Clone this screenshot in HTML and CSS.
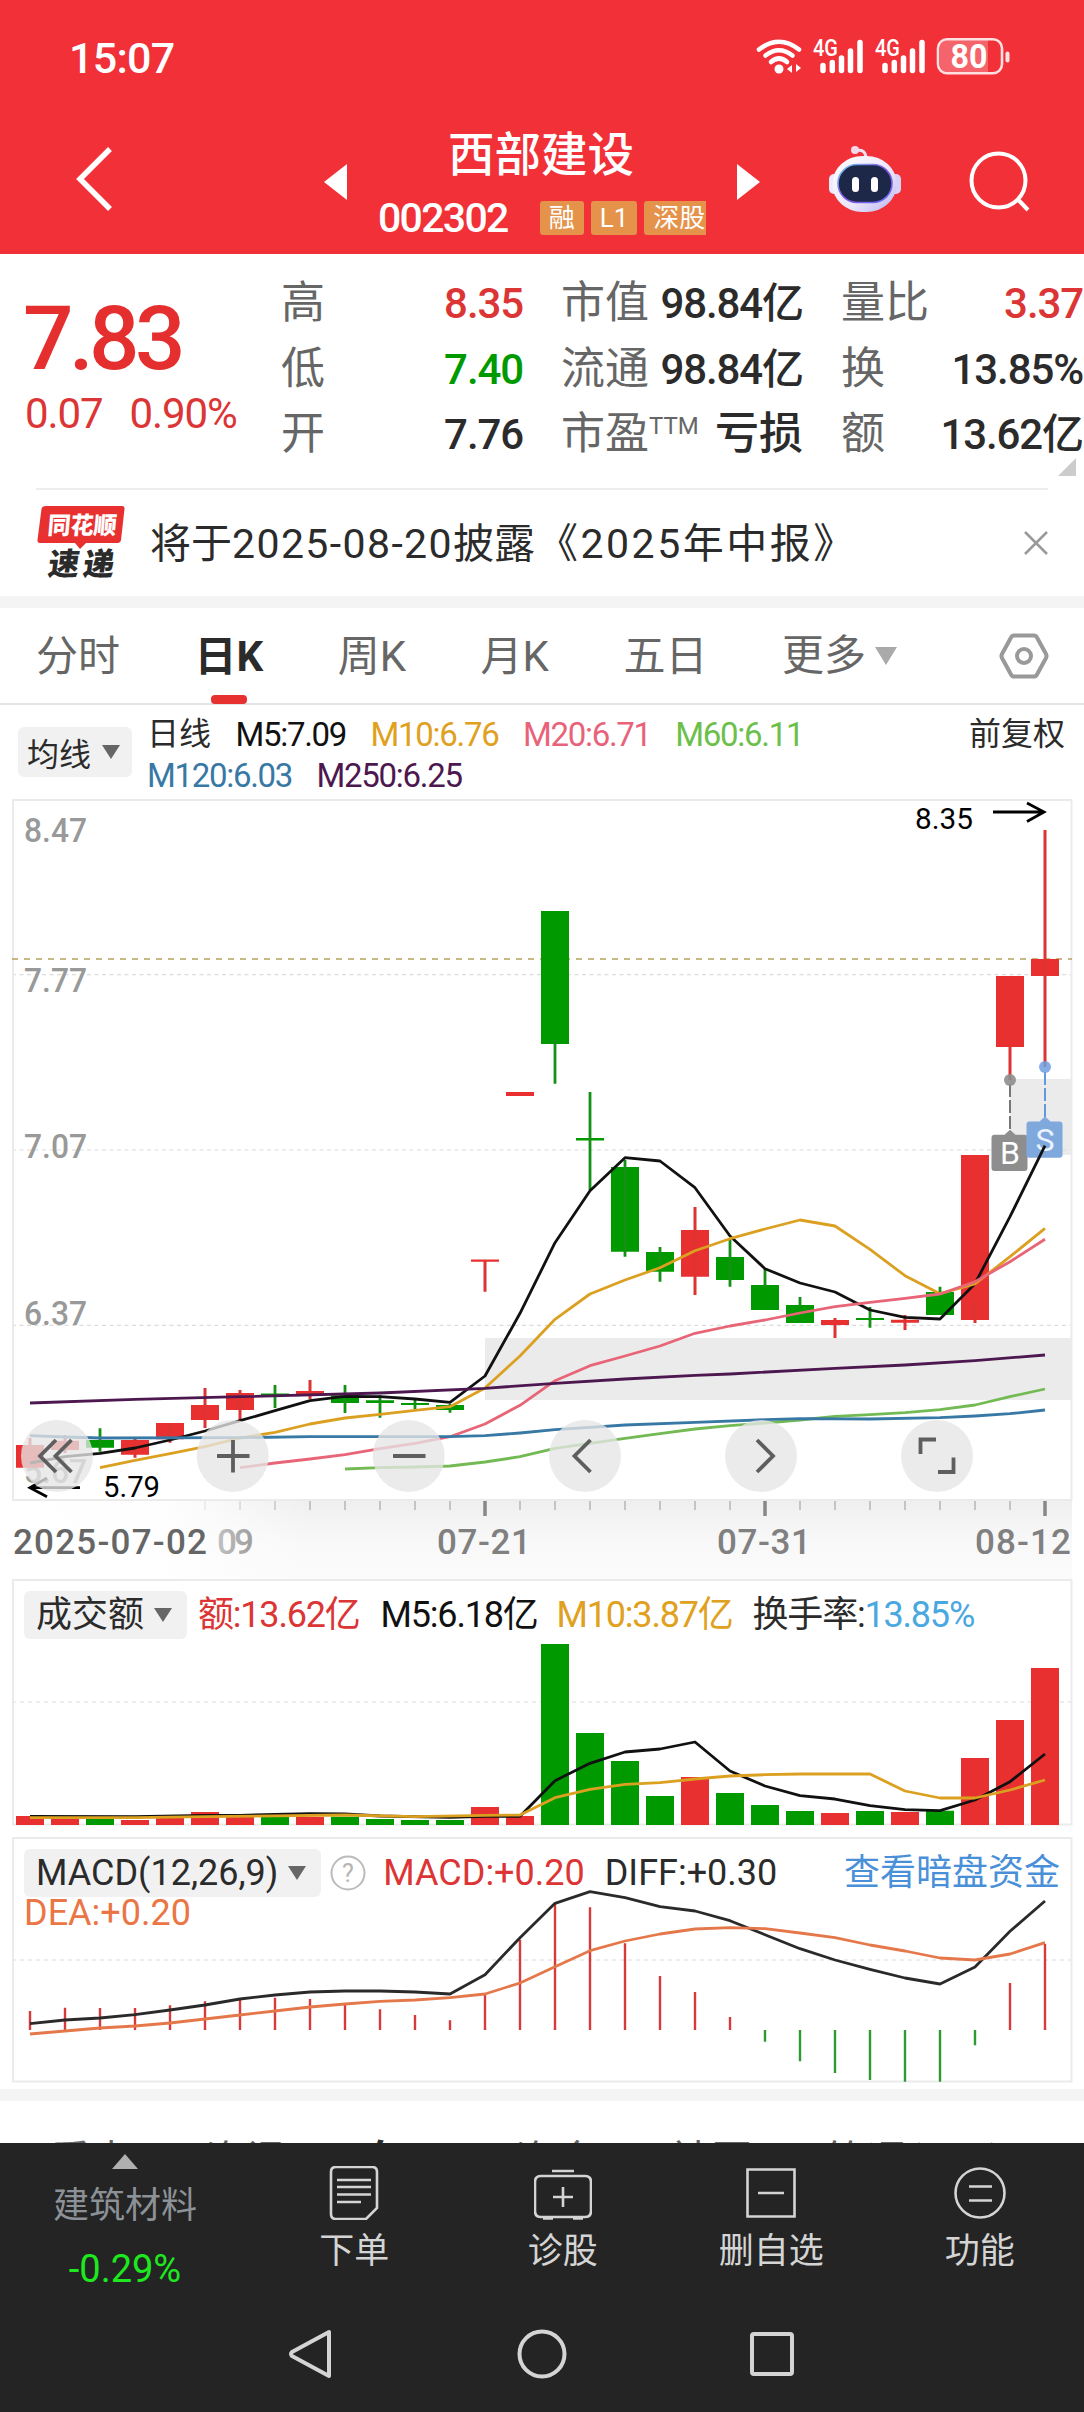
FILE: index.html
```html
<!DOCTYPE html>
<html lang="zh-CN">
<head>
<meta charset="utf-8">
<title>西部建设 002302</title>
<link rel="stylesheet" href="styles.css">
</head>
<body>
<div class="screen">
  <header class="header">
    <div class="status">
      <span class="clock">15:07</span>
      <svg class="status-icons" viewBox="750 30 270 50" width="270" height="50" fill="none" stroke="#fff" stroke-linecap="round">
        <g stroke-width="4.6"><path d="M759 48.500Q779 33 799 48.500"/><path d="M765.500 54.500Q779 44 792.500 54.500"/><path d="M771 61Q779 54 787 61"/></g>
        <circle cx="779" cy="68" r="4.500" fill="#fff" stroke="none"/>
        <path d="M787 68l5-4v8zM801 67l-5-4v8z" fill="#fff" stroke="none"/>
        <path stroke-width="5.500" d="M823 64.500v5M832.300 61.500v8M841.500 57v12.500M850.500 50v19.500M860 41.500v28M885 64.500v5M894.300 61.500v8M903.500 57v12.500M912.500 50v19.500M922 41.500v28"/>
        <g fill="#fff" stroke="none" font-size="23" font-weight="500"><text x="813" y="55" textLength="25" lengthAdjust="spacingAndGlyphs">4G</text><text x="875" y="55" textLength="25" lengthAdjust="spacingAndGlyphs">4G</text></g>
        <path d="M948 39h40v32h-40q-8 0-8-8V47q0-8 8-8z" fill="#f5646a" stroke="none"/>
        <rect x="938" y="38.200" width="64" height="34" rx="9" stroke="#ffdfe0" stroke-width="2.600"/>
        <path stroke="#ffdfe0" stroke-width="4" d="M1007.500 52.500v7"/>
        <text x="950.500" y="66.700" font-size="33" font-weight="700" fill="#fff" stroke="none" textLength="37" lengthAdjust="spacingAndGlyphs">80</text>
      </svg>
    </div>
    <div class="titlebar">
      <svg class="back" viewBox="0 0 40 66" width="40" height="66"><path d="M36 3 6 33 36 63" fill="none" stroke="#fff" stroke-width="5.500"/></svg>
      <svg class="prev" viewBox="0 0 23 36" width="23" height="36"><path d="M23 0v36L0 18z" fill="#fff"/></svg>
      <div class="stock">
        <h1 class="stock-name">西部建设</h1>
        <div class="stock-meta">
          <span class="code">002302</span>
          <span class="badge">融</span><span class="badge">L1</span><span class="badge cut">深股</span>
        </div>
      </div>
      <svg class="next" viewBox="0 0 23 36" width="23" height="36"><path d="M0 0v36l23-18z" fill="#fff"/></svg>
      <svg class="robot" viewBox="828 144 74 70" width="74" height="70">
        <defs><linearGradient id="shell" x1="0" y1="0" x2="1" y2="1"><stop offset="0" stop-color="#fff"/><stop offset=".6" stop-color="#ebe6fb"/><stop offset="1" stop-color="#b9b2f0"/></linearGradient>
        <linearGradient id="rim" x1="0" y1="0" x2="1" y2="1"><stop offset="0" stop-color="#6fd2ee"/><stop offset=".5" stop-color="#8a52e8"/><stop offset="1" stop-color="#5a6ff0"/></linearGradient></defs>
        <path d="M855 151q11-3 11 8" fill="none" stroke="#f1dff2" stroke-width="3"/><circle cx="855" cy="150" r="4" fill="#f3d8ea"/>
        <rect x="829" y="174" width="12" height="20" rx="5" fill="#ece9fb"/><rect x="889" y="174" width="12" height="20" rx="5" fill="#d8d2f6"/>
        <rect x="832.500" y="156" width="64" height="56" rx="30" ry="27" fill="url(#shell)"/>
        <rect x="838" y="164.500" width="54" height="38" rx="19" fill="#1d2748" stroke="url(#rim)" stroke-width="1.600"/>
        <rect x="852" y="177" width="7" height="15" rx="3.500" fill="#fff"/><rect x="871" y="177" width="7" height="15" rx="3.500" fill="#fff"/>
      </svg>
      <svg class="search" viewBox="968 150 64 64" width="64" height="64" fill="none" stroke="#fff" stroke-width="4"><circle cx="998.500" cy="180.500" r="27"/><path d="M1018 199.500 1028 210"/></svg>
    </div>
  </header>

  <section class="quote">
    <div class="price-box">
      <div class="price">7.83</div>
      <div class="change"><span>0.07</span><span>0.90%</span></div>
    </div>
    <dl class="stats">
      <div><dt>高</dt><dd class="up">8.35</dd></div>
      <div><dt>市值</dt><dd>98.84亿</dd></div>
      <div><dt>量比</dt><dd class="up">3.37</dd></div>
      <div><dt>低</dt><dd class="down">7.40</dd></div>
      <div><dt>流通</dt><dd>98.84亿</dd></div>
      <div><dt>换</dt><dd>13.85%</dd></div>
      <div><dt>开</dt><dd>7.76</dd></div>
      <div><dt>市盈<span class="ttm">TTM</span></dt><dd class="loss">亏损</dd></div>
      <div><dt>额</dt><dd>13.62亿</dd></div>
    </dl>
    <svg class="corner" viewBox="0 0 18 18" width="18" height="18"><path d="M18 0v18H0z" fill="#ccc"/></svg>
  </section>

  <section class="notice">
    <svg class="logo" viewBox="36 504 90 76" width="90" height="76">
      <path d="M46 506h76q3 0 2.500 3l-3.500 31q-.5 3-3.500 3H86l-6 6-5-6H40q-3 0-2.500-3l4-31q.5-3 4.500-3z" fill="#e7302f"/>
      <g font-weight="900"><text transform="translate(47 534) skewX(-5)" font-size="24" fill="#fff" textLength="69" lengthAdjust="spacingAndGlyphs">同花顺</text>
      <text transform="translate(47 575) skewX(-8)" font-size="31" fill="#2b2b2b" textLength="66" lengthAdjust="spacing">速递</text></g>
    </svg>
    <p class="notice-text">将于<span class="date">2025-08-20</span>披露<span class="report">《2025年中报》</span></p>
    <svg class="close" viewBox="0 0 24 24" width="24" height="24"><path d="M1 1l22 22M23 1 1 23" stroke="#999" stroke-width="2.500"/></svg>
  </section>

  <nav class="tabs">
    <span>分时</span><span class="active">日K</span><span>周K</span><span>月K</span><span>五日</span>
    <span class="more">更多<svg viewBox="0 0 22 18" width="22" height="18"><path d="M0 0h22L11 18z" fill="#aaa"/></svg></span>
    <svg class="settings" viewBox="0 0 50 46" width="50" height="46" fill="none" stroke="#999" stroke-width="4"><path d="M15 2.500h20q2 0 3 2l9 16.500q1 2 0 4l-9 16.500q-1 2-3 2H15q-2 0-3-2L3 25q-1-2 0-4l9-16.500q1-2 3-2z"/><circle cx="25" cy="23" r="7"/></svg>
  </nav>

  <section class="ma-legend">
    <button class="chip small">均线<i class="caret"></i></button>
    <div class="ma-items">
      <span class="day">日线</span><span class="m5">M5:7.09</span><span class="m10">M10:6.76</span><span class="m20">M20:6.71</span><span class="m60">M60:6.11</span>
      <span class="m120">M120:6.03</span><span class="m250">M250:6.25</span>
    </div>
    <span class="adjust">前复权</span>
  </section>

  <svg class="kline" viewBox="0 799 1084 702" width="1084" height="702" fill="none">
    <path fill="#ebebeb" d="M485 1338h587v62H485zM1010 1079h62v76h-62z"/>
    <path stroke="#dcdcdc" stroke-width="1.200" stroke-dasharray="4 3.500" d="M12 974.700h1060M12 1150h1060M12 1325.300h1060"/>
    <path stroke="#ebebeb" stroke-width="2" d="M13 800h1058.500v700H13z"/>
    <g class="axis-label" fill="#999" font-size="34" font-weight="500">
      <text x="24" y="841.700" textLength="63" lengthAdjust="spacingAndGlyphs">8.47</text>
      <text x="24" y="992" textLength="63" lengthAdjust="spacingAndGlyphs">7.77</text>
      <text x="24" y="1158" textLength="63" lengthAdjust="spacingAndGlyphs">7.07</text>
      <text x="24" y="1324.500" textLength="63" lengthAdjust="spacingAndGlyphs">6.37</text>
      <text x="24" y="1482.500" textLength="63" lengthAdjust="spacingAndGlyphs">5.67</text>
    </g>
    <path stroke="#b5a25c" stroke-width="1.600" stroke-dasharray="6 6" d="M12 959h1060"/>
    <path fill="#e83030" d="M16 1445h28v22.700H16zM51 1440.700h28v9.300H51zM121 1440h28v14.700h-28zM156 1423h28v16.300h-28zM191 1405h28v15h-28zM226 1393h28v17h-28zM296 1391h28v3.500h-28zM471 1259.500h28v2.300h-28zM506 1092h28v4h-28zM681 1230h28v46.700h-28zM821 1320h28v5h-28zM891 1319.700h28v3h-28zM961 1155h28v165h-28zM996 976h28v71h-28zM1031 959h28v17h-28z"/>
    <path stroke="#dd3333" stroke-width="3" d="M30 1438v7M65 1435v18M135 1438.700v19M170 1423v19.700M205 1388v40M240 1390v30.700M310 1380v19M485 1260v31.700M695 1207v88M835 1318v20M905 1315v15M975 1300v23M1010 1047v33M1045 830v237"/>
    <path fill="#009a00" d="M86 1440h28v7.700H86zM261 1393.500h28v2h-28zM331 1395.300h28v7.700h-28zM366 1400.300h28v2.700h-28zM401 1403h28v2h-28zM436 1405h28v5h-28zM541 911h28v133h-28zM576 1138h28v2.400h-28zM611 1167h28v84.700h-28zM646 1252h28v19.700h-28zM716 1257h28v23h-28zM751 1285h28v25h-28zM786 1305h28v18h-28zM856 1318h28v2h-28zM926 1292h28v23h-28z"/>
    <path stroke="#149014" stroke-width="2.800" d="M100 1428.300v23.400M275 1385v23M345 1385v28M380 1395.300v22.400M415 1400v9M450 1404v8.700M555 1040v43.700M590 1092v98M625 1160v96.700M660 1247v34.700M730 1238v48.700M765 1268v20M800 1297v10M870 1307v20.700M940 1286.700v8"/>
    <path stroke="#777" stroke-width="2" d="M1010 1084v50" stroke-dasharray="13 3"/>
    <path stroke="#5f9bdc" stroke-width="2" d="M1045 1072v46" stroke-dasharray="13 3"/>
    <circle cx="1010" cy="1080" r="6" fill="#8e8e8e" opacity=".9"/><circle cx="1045" cy="1067" r="6" fill="#6f9fe0" opacity=".85"/>
    <path fill="#8e8e8e" d="M994.500 1134.700h10l5.500-5 5.500 5h9q3 0 3 3v30.300q0 3-3 3h-30q-3 0-3-3v-30.300q0-3 3-3z"/>
    <path fill="#7fa9dd" d="M1029.500 1121.500h10l5.500-5 5.500 5h9q3 0 3 3v30.300q0 3-3 3h-30q-3 0-3-3v-30.300q0-3 3-3z"/>
    <text x="1010" y="1164" font-size="32" fill="#fff" text-anchor="middle">B</text>
    <text x="1045" y="1151" font-size="32" fill="#eaf2ff" text-anchor="middle">S</text>
    <g stroke-width="2.800" stroke-linejoin="round">
      <path stroke="#111" d="M30 1463 65 1456.700 100 1453.300 135 1448 170 1440 205 1431 240 1420.700 275 1410.700 310 1400.700 345 1396.300 380 1396.700 415 1399 450 1402.300 485 1376 520 1313.300 555 1242.700 590 1190.700 625 1157.700 660 1161 695 1187.700 730 1236 765 1268.700 800 1283 835 1292 870 1310 905 1317.300 940 1319 975 1283.700 1010 1216.700 1045 1145.700"/>
      <path stroke="#dca021" d="M100 1467.700 135 1460.300 170 1453.700 205 1446.700 240 1438 275 1432.300 310 1424 345 1418 380 1414.300 415 1410.300 450 1406.700 485 1388 520 1356 555 1319.300 590 1294 625 1280 660 1267.700 695 1250.700 730 1238.700 765 1229 800 1220 835 1226 870 1249.300 905 1275.700 940 1293.700 975 1284 1010 1256.700 1045 1228.300"/>
      <path stroke="#e76576" d="M240 1467.700 275 1463 310 1459 345 1454.700 380 1448.700 415 1443.300 450 1436.700 485 1424 520 1405.300 555 1380.700 590 1365.700 625 1356 660 1346 695 1333.300 730 1326 765 1320 800 1313 835 1306.700 870 1302.300 905 1298.300 940 1294 975 1281.700 1010 1261.700 1045 1239.300"/>
      <path stroke="#73ba54" d="M345 1469 380 1467.700 415 1467 450 1466 485 1462 520 1456.700 555 1448.300 590 1443.300 625 1438.300 660 1433.700 695 1429 730 1425.700 765 1423 800 1420 835 1416.300 870 1414.700 905 1412.700 940 1409.700 975 1405 1010 1396.700 1045 1389"/>
      <path stroke="#3878a5" d="M30 1435.700 65 1437 100 1438 240 1437.700 310 1436.700 450 1436.700 485 1435.700 520 1433 555 1429.700 590 1427.300 625 1425 695 1422.300 765 1419.700 800 1418.700 870 1419 940 1417.700 975 1416 1010 1413.700 1045 1410"/>
      <path stroke="#4d1850" d="M30 1403 135 1399.300 240 1396.700 380 1393 485 1388.300 555 1383.300 625 1379 695 1375.300 730 1374 835 1368.300 905 1365 975 1360.700 1045 1355"/>
    </g>
    <path stroke="#000" stroke-width="2.800" d="M993 812h50M1027 803l17 9-17 9.500M80 1487.700H30M47 1478l-17 9.700 17 9"/>
    <g font-size="30" fill="#000"><text x="915" y="829" textLength="58" lengthAdjust="spacingAndGlyphs">8.35</text><text x="103" y="1496.500" textLength="57" lengthAdjust="spacingAndGlyphs">5.79</text></g>
    <g fill="#e6e6e6" fill-opacity=".78"><circle cx="57" cy="1456" r="36"/><circle cx="232.700" cy="1456" r="36"/><circle cx="408.700" cy="1456" r="36"/><circle cx="585" cy="1456" r="36"/><circle cx="761" cy="1456" r="36"/><circle cx="937" cy="1456" r="36"/></g>
    <path stroke="#5e5e5e" stroke-width="3.800" d="M56 1440l-16 16 16 16M71.500 1440l-16 16 16 16M217 1456h32.500M233 1440v32.500M393 1456h32.500M590.500 1440l-16 16 16 16M757 1440l16 16-16 16M920.500 1454v-14.500h15.500M953.500 1457.500v14.500H938"/>
  </svg>

  <svg class="time-axis" viewBox="0 1501 1084 78" width="1084" height="78" font-size="35">
    <defs>
      <linearGradient id="shade" x1="0" y1="0" x2="0" y2="1"><stop offset="0" stop-color="#efefef"/><stop offset=".5" stop-color="#f8f8f8"/><stop offset="1" stop-color="#fbfbfb"/></linearGradient>
      <linearGradient id="fade"><stop offset="0" stop-color="#fff"/><stop offset=".55" stop-color="#fff" stop-opacity=".9"/><stop offset="1" stop-color="#fff" stop-opacity="0"/></linearGradient>
    </defs>
    <path fill="url(#shade)" d="M12 1501h1060v78H12z"/>
    <path stroke="#c4c4c4" stroke-width="2" d="M205 1501v9M240 1501v9M275 1501v9M310 1501v9M345 1501v9M380 1501v9M415 1501v9M450 1501v9M520 1501v9M555 1501v9M590 1501v9M625 1501v9M660 1501v9M695 1501v9M730 1501v9M800 1501v9M835 1501v9M870 1501v9M905 1501v9M940 1501v9M975 1501v9M1010 1501v9"/>
    <path stroke="#888" stroke-width="3.500" d="M485 1501v15M765 1501v15M1045 1501v15"/>
    <text x="217" y="1554" fill="#666" font-weight="500" textLength="37">09</text>
    <path fill="url(#fade)" d="M0 1501h310v78H0z"/>
    <g font-weight="500"><text x="13" y="1554" fill="#666" textLength="194">2025-07-02</text>
    <g fill="#808080"><text x="437" y="1554" textLength="94">07-21</text><text x="717" y="1554" textLength="94">07-31</text><text x="975" y="1554" textLength="96">08-12</text></g></g>
  </svg>

  <section class="panel volume">
    <svg class="plot" viewBox="0 1579 1084 247" width="1084" height="247" fill="none">
      <path stroke="#ebebeb" stroke-width="2" d="M13 1580h1058.500v244.500H13z"/>
      <path stroke="#e8e8e8" stroke-width="1.500" stroke-dasharray="4 4" d="M12 1702h1060"/>
      <path fill="#e83030" d="M16 1816h28v9H16zM51 1818.300h28v6.700H51zM121 1820h28v5h-28zM156 1817.300h28v7.700h-28zM191 1812h28v13h-28zM226 1816.700h28v8.300h-28zM296 1817h28v8h-28zM471 1807h28v18h-28zM506 1816h28v9h-28zM681 1777h28v48h-28zM821 1813h28v12h-28zM891 1812h28v13h-28zM961 1758h28v67h-28zM996 1720h28v105h-28zM1031 1668h28v157h-28z"/>
      <path fill="#009a00" d="M86 1819h28v6H86zM261 1817h28v8h-28zM331 1816.700h28v8.300h-28zM366 1819h28v6h-28zM401 1820h28v5h-28zM436 1820h28v5h-28zM541 1644h28v181h-28zM576 1733h28v92h-28zM611 1761h28v64h-28zM646 1796h28v29h-28zM716 1793h28v32h-28zM751 1805h28v20h-28zM786 1811h28v14h-28zM856 1811h28v14h-28zM926 1810.700h28v14.300h-28z"/>
      <g stroke-width="2.800" stroke-linejoin="round">
        <path stroke="#111" d="M30 1816.300 135 1816.700 205 1815.300 240 1815.300 275 1814.300 310 1813.700 345 1814 380 1816 450 1817.300 485 1816.300 520 1816.300 555 1780.700 590 1763.300 625 1752 660 1749 695 1742 730 1771 765 1786 800 1795.700 835 1799 870 1805.700 905 1809.700 940 1810.700 975 1800 1010 1781.700 1045 1754"/>
        <path stroke="#dca021" d="M30 1817.700 135 1817.700 205 1816.700 345 1815 415 1816.700 485 1815.300 520 1815 555 1797.700 590 1789.300 625 1784.300 660 1782.700 695 1779 730 1776 765 1774.700 800 1774 870 1774 905 1791 940 1798 975 1798 1010 1790 1045 1780"/>
      </g>
    </svg>
    <div class="legend">
      <button class="chip">成交额<i class="caret"></i></button>
      <span class="up v1">额:13.62亿</span><span class="m5 v2">M5:6.18亿</span><span class="m10 v3">M10:3.87亿</span><span class="v4">换手率:<b>13.85%</b></span>
    </div>
  </section>

  <section class="panel macd">
    <svg class="plot" viewBox="0 1837 1084 246" width="1084" height="246" fill="none">
      <path stroke="#ebebeb" stroke-width="2" d="M13 1838h1058.500v243.500H13z"/>
      <path stroke="#e8e8e8" stroke-width="1.500" stroke-dasharray="4 4" d="M12 1960h1060"/>
      <path stroke="#d63a3a" stroke-width="2.400" d="M30 2030v-19M65 2030v-22.300M100 2030v-22M135 2030v-22M170 2030v-24.700M205 2030v-28.700M240 2030v-31.700M275 2030v-32.300M310 2030v-31M345 2030v-25.300M380 2030v-20.700M415 2030v-15M450 2030v-9.700M485 2030v-36M520 2030v-90.300M555 2030v-126M590 2030v-122.700M625 2030v-86.700M660 2030v-54M695 2030v-38M730 2030v-13M1010 2030v-47M1045 2030v-86"/>
      <path stroke="#2f9a2f" stroke-width="2.400" d="M765 2030v11.700M800 2030v31.300M835 2030v43M870 2030v50M905 2030v51.700M940 2030v51.700M975 2030v15.300"/>
      <g stroke-width="2.800" stroke-linejoin="round">
        <path stroke="#2a2a2a" d="M30 2023.700 65 2020 100 2018 135 2014.700 170 2010 205 2005 240 1999 275 1995 310 1992 345 1991 380 1991 415 1992 450 1994 485 1974.700 520 1937.700 555 1903.300 590 1891.700 625 1897.700 660 1906.700 695 1911 730 1920.700 765 1934.700 800 1948.700 835 1960 870 1969.300 905 1978 940 1984 975 1967 1010 1931.300 1045 1901"/>
        <path stroke="#e5784a" d="M30 2034 65 2031 100 2028 135 2026 170 2023 205 2019 240 2015 275 2011 310 2007 345 2004 380 2001.300 415 2000 450 1997.700 485 1994 520 1983 555 1966.700 590 1950.700 625 1941 660 1934 695 1929 730 1927.700 765 1928.700 800 1933 835 1937.700 870 1945 905 1951 940 1958 975 1960 1010 1954 1045 1942.700"/>
      </g>
    </svg>
    <div class="legend">
      <button class="chip">MACD(12,26,9)<i class="caret"></i></button>
      <svg class="help" viewBox="0 0 36 36" width="36" height="36"><circle cx="18" cy="18" r="16.500" fill="none" stroke="#bbb" stroke-width="2"/><text x="18" y="27" font-size="25" fill="#b5b5b5" text-anchor="middle">?</text></svg>
      <span class="up c1">MACD:+0.20</span><span class="c2">DIFF:+0.30</span><a class="link">查看暗盘资金</a>
      <span class="dea">DEA:+0.20</span>
    </div>
  </section>

  <nav class="subtabs"><span>看点</span><span>资讯</span><span class="active">盘口</span><span>资金</span><span>社区</span><span>简况(F10)</span></nav>

  <footer class="footer">
    <div class="actions">
      <div class="sector">
        <svg viewBox="0 0 26 15" width="26" height="15"><path d="M13 0l13 15H0z" fill="#b0b0b0"/></svg>
        <span>建筑材料</span><em>-0.29%</em>
      </div>
      <div class="action"><svg viewBox="-27 -27 54 54" width="54" height="54"><path d="M-18-26h36q5 0 5 5v36L12 26h-30q-5 0-5-5v-42q0-5 5-5zM-17-13h34M-17-6h34M-17 1.500h34M-17 9H7"/></svg><span>下单</span></div>
      <div class="action"><svg viewBox="-29 -27 58 54" width="58" height="54"><path d="M-22-17h44q6 0 6 6v29q0 6-6 6h-44q-6 0-6-6v-29q0-6 6-6zM0-6v20M-10 4h20M-11-22h22M-20 25.500h10M10 25.500h10"/></svg><span>诊股</span></div>
      <div class="action"><svg viewBox="-27 -27 54 54" width="54" height="54"><path d="M-23.500-23.500h47v47h-47zM-13 0h26"/></svg><span>删自选</span></div>
      <div class="action"><svg viewBox="-27 -27 54 54" width="54" height="54"><circle r="24.500"/><path d="M-11-6.500h23M-11 7.500h23"/></svg><span>功能</span></div>
    </div>
    <div class="sysnav">
      <svg viewBox="0 0 46 50" width="46" height="50"><path d="M41 3v44L4 27q-2-2 0-4z"/></svg>
      <svg viewBox="0 0 50 50" width="50" height="50"><circle cx="25" cy="25" r="22.500"/></svg>
      <svg viewBox="0 0 46 46" width="46" height="46"><rect x="3" y="3" width="40" height="40" rx="2"/></svg>
    </div>
  </footer>
</div>
</body>
</html>
```
FILE: styles.css
```css
* { box-sizing: border-box; margin: 0; padding: 0; }
body { background: #fff; font-family: Roboto, "Noto Sans CJK SC", sans-serif; color: #2b2b2b; }
svg { display: block; flex: none; }
i, em { font-style: normal; }
button { border: 0; font: inherit; color: inherit; }
.screen { width: 1084px; height: 2412px; overflow: hidden; display: flex; flex-direction: column; }
.screen > * { flex: none; }

.up { color: #dc3535; }
.down { color: #009a00; }
.m5 { color: #111; }
.m10 { color: #e0a020; }
.m20 { color: #e8637a; }
.m60 { color: #6cc04a; }
.m120 { color: #3878a5; }
.m250 { color: #4d1850; }

.header { height: 254px; background: #f13038; color: #fff; }
.status { height: 112px; padding: 3px 64px 0 69px; display: flex; align-items: center; justify-content: space-between; }
.clock { font-size: 43px; font-weight: 500; letter-spacing: -.7px; }
.status-icons { margin-top: -3px; }
.titlebar { height: 142px; display: flex; align-items: flex-start; padding-left: 74px; }
.back { margin-top: 34px; }
.prev { margin: 52px 0 0 210px; }
.stock { width: 390px; padding: 13px 0 0 30px; }
.stock-name { font-size: 46.500px; font-weight: 500; line-height: 60px; padding-left: 71px; }
.stock-meta { display: flex; align-items: center; height: 44px; margin-top: 11px; gap: 7px; }
.code { font-size: 41px; font-weight: 500; letter-spacing: -1.700px; margin: 0 25px 0 1px; }
.badge { height: 34px; line-height: 34px; padding: 0 9px; font-size: 26px; background: #e5924a; border-radius: 3px; white-space: nowrap; }
.badge.cut { width: 62px; overflow: hidden; border-radius: 3px 0 0 3px; }
.next { margin-top: 52px; }
.robot { margin: 32px 0 0 68px; }
.search { margin: 38px 0 0 66px; }

.quote { height: 234px; padding-top: 17px; display: flex; flex-wrap: wrap; align-content: flex-start; }
.price-box { width: 281px; height: 196px; padding-left: 25px; color: #e52f2f; }
.price { font-size: 89px; font-weight: 500; letter-spacing: -4.600px; line-height: 100px; margin-top: 18px; margin-left: -2px; }
.change { display: flex; gap: 27px; font-size: 42px; letter-spacing: -1.100px; line-height: 50px; color: #dc3535; }
.stats { width: 803px; height: 196px; display: grid; grid-template-columns: repeat(3, 242px); column-gap: 38px; grid-auto-rows: 65.500px; }
.stats div { display: flex; justify-content: space-between; align-items: center; white-space: nowrap; }
.stats dt { font-size: 44px; color: #666; line-height: 65px; display: flex; }
.stats dd { font-size: 42px; font-weight: 500; letter-spacing: -1.100px; line-height: 65px; }
.stats .loss { font-size: 44px; letter-spacing: 0; }
.ttm { font-size: 24px; line-height: 48px; }
.corner { margin: -9px 8px 0 auto; }

.notice { height: 108px; margin: 0 36px; border-top: 2px solid #ededed; display: flex; align-items: center; }
.logo { margin-top: -2px; }
.notice-text { font-size: 41px; margin-left: 24px; line-height: 60px; letter-spacing: 0; white-space: nowrap; flex: 1; padding-top: 1px; }
.notice-text .date { letter-spacing: 1.400px; }
.notice-text .report { letter-spacing: 2.500px; margin-left: 2px; }

.tabs { height: 109px; border-top: 12px solid #f4f4f4; border-bottom: 2px solid #e4e4e4; display: flex; align-items: center; padding: 0 35px 0 36px; gap: 74.500px; font-size: 42px; color: #666; }
.tabs span { line-height: 98px; height: 95px; }
.tabs .active { font-weight: 700; color: #2b2b2b; }
.tabs .active::after { content: ""; display: block; width: 36px; height: 9px; margin: -11px auto 0; border-radius: 4px; background: #e73131; }
.tabs .more { display: flex; align-items: center; gap: 9px; margin-left: 0; }
.settings { margin-left: auto; }

.ma-legend { height: 94px; display: flex; padding: 7px 19px 0 18px; }
.chip { height: 48px; display: flex; align-items: center; background: #f1f1f1; border-radius: 6px; font-size: 36px; padding: 0 15px 0 12px; gap: 10px; white-space: nowrap; }
.caret { border: 9px solid transparent; border-top: 14px solid #666; border-bottom: 0; }
.chip.small { height: 50px; width: 114px; font-size: 32px; padding: 0 11px 0 9px; margin-top: 15px; gap: 11px; }
.ma-items { width: 760px; margin: 2px 0 0 15px; display: flex; flex-wrap: wrap; align-content: flex-start; font-size: 33px; letter-spacing: -1.300px; line-height: 41px; column-gap: 24.500px; white-space: nowrap; }
.ma-items .day { font-size: 32px; letter-spacing: 0; }
.ma-items .m60 { margin-right: 80px; }
.adjust { margin: 2px 0 0 auto; font-size: 32px; line-height: 41px; }

.time-axis { height: 78px; }
.panel { display: grid; }
.panel > * { grid-area: 1 / 1; }
.volume { height: 247px; }
.macd { height: 246px; margin-top: 11px; }
.legend { display: flex; flex-wrap: wrap; align-content: flex-start; align-items: center; height: 100px; padding: 12px 25px 0 24px; font-size: 36px; line-height: 48px; white-space: nowrap; letter-spacing: -1.200px; }
.legend .chip { letter-spacing: 0; }
.v1 { margin-left: 11px; }
.v2 { margin-left: 21px; }
.v3 { margin-left: 19px; }
.v4 { margin-left: 20px; }
.v4 b { font-weight: 400; color: #4aa8e0; }
.macd .legend { letter-spacing: 0; }
.help { margin-left: 9px; }
.c1 { margin-left: 17px; }
.c2 { margin-left: 20px; }
.link { margin-left: auto; color: #4a90d9; margin-right: -1px; }
.dea { width: 100%; color: #ea7645; line-height: 32px; }

.subtabs { height: 54px; margin-top: 6px; border-top: 12px solid #f4f4f4; overflow: hidden; display: flex; padding: 30px 0 0 50px; gap: 73px; font-size: 41px; line-height: 60px; color: #666; white-space: nowrap; }
.subtabs .active { font-weight: 700; color: #2b2b2b; }

.footer { height: 269px; background: #242424; color: #d4d4d4; }
.actions { height: 150px; display: grid; grid-template-columns: 250px repeat(4, 208.500px); }
.sector { display: flex; flex-direction: column; align-items: center; padding-top: 11px; font-size: 36px; color: #8b9196; }
.sector span { line-height: 54px; margin-top: 10px; }
.sector em { font-size: 38px; line-height: 50px; margin-top: 11px; color: #1ee81e; }
.action { display: flex; flex-direction: column; align-items: center; padding-top: 23px; font-size: 35px; }
.action span { line-height: 50px; margin-top: 7px; }
.action path, .action circle, .sysnav svg { fill: none; stroke: #d4d4d4; stroke-width: 2.600; }
.sysnav { display: flex; justify-content: space-between; align-items: center; height: 122px; padding: 0 289px 0 288px; }
.sysnav svg { stroke-width: 4; stroke-linejoin: round; }
```
